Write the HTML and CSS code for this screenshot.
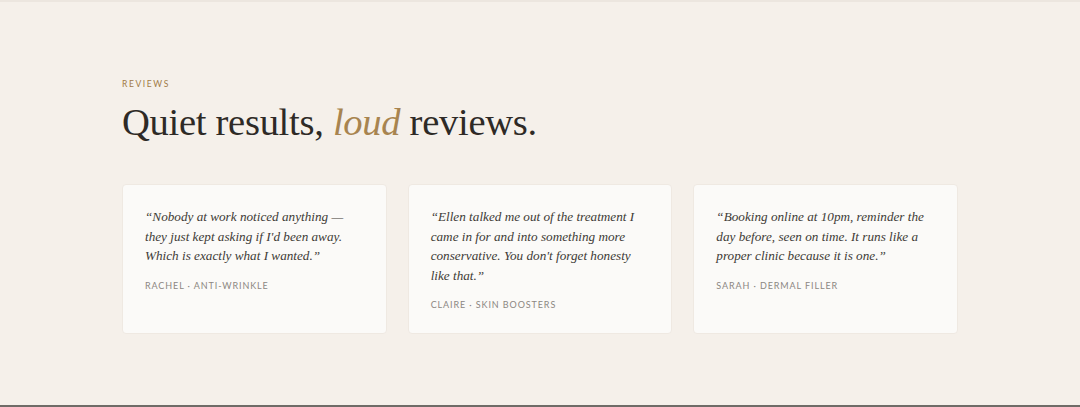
FILE: index.html
```html
<!DOCTYPE html>
<html lang="en">
<head>
<meta charset="utf-8">
<title>Reviews</title>
<link rel="stylesheet" href="styles.css">
</head>
<body>
<section class="reviews">
  <div class="container">
    <p class="eyebrow">Reviews</p>
    <h2 class="title">Quiet results, <em>loud</em> reviews.</h2>
    <div class="grid">
      <article class="card">
        <p class="quote">“Nobody at work noticed anything — they just kept asking if I'd been away. Which is exactly what I wanted.”</p>
        <p class="who">Rachel · Anti-wrinkle</p>
      </article>
      <article class="card">
        <p class="quote">“Ellen talked me out of the treatment I came in for and into something more conservative. You don't forget honesty like that.”</p>
        <p class="who">Claire · Skin boosters</p>
      </article>
      <article class="card">
        <p class="quote">“Booking online at 10pm, reminder the day before, seen on time. It runs like a proper clinic because it is one.”</p>
        <p class="who">Sarah · Dermal filler</p>
      </article>
    </div>
  </div>
</section>
<footer class="footer"></footer>
</body>
</html>
```

FILE: styles.css
```css
* { box-sizing: border-box; }
html, body { margin: 0; padding: 0; }
body {
  background: #f5f0ea;
  font-family: "Liberation Serif", "Times New Roman", serif;
  color: #2a2622;
}
.reviews {
  border-top: 2px solid #ece6df;
  height: 405px;
  padding-top: 77px;
}
.container {
  width: 836px;
  margin: 0 0 0 122px;
}
.eyebrow {
  margin: 0;
  font-family: "Lato", "Liberation Sans", sans-serif;
  font-size: 8.5px;
  letter-spacing: 1.6px;
  text-transform: uppercase;
  color: #a07a45;
  line-height: 11px;
}
.title {
  margin: 9px 0 0;
  font-weight: 400;
  font-size: 38.6px;
  line-height: 46px;
  letter-spacing: -0.3px;
  color: #2e2a26;
}
.title em {
  color: #a8844f;
  font-style: italic;
}
.grid {
  display: grid;
  grid-template-columns: repeat(3, 1fr);
  gap: 21px;
  margin-top: 39px;
}
.card {
  background: #fbfaf8;
  border: 1px solid #efe9e2;
  border-radius: 4px;
  padding: 22px 22px 23px;
  min-height: 149px;
}
.quote {
  margin: 0;
  font-style: italic;
  font-size: 13.2px;
  line-height: 19.5px;
  color: #403b36;
}
.who {
  margin: 14px 0 0;
  font-family: "Lato", "Liberation Sans", sans-serif;
  font-size: 9px;
  letter-spacing: 0.9px;
  text-transform: uppercase;
  color: #8c8782;
}
.footer {
  height: 2px;
  background: #6f6b67;
}
```
